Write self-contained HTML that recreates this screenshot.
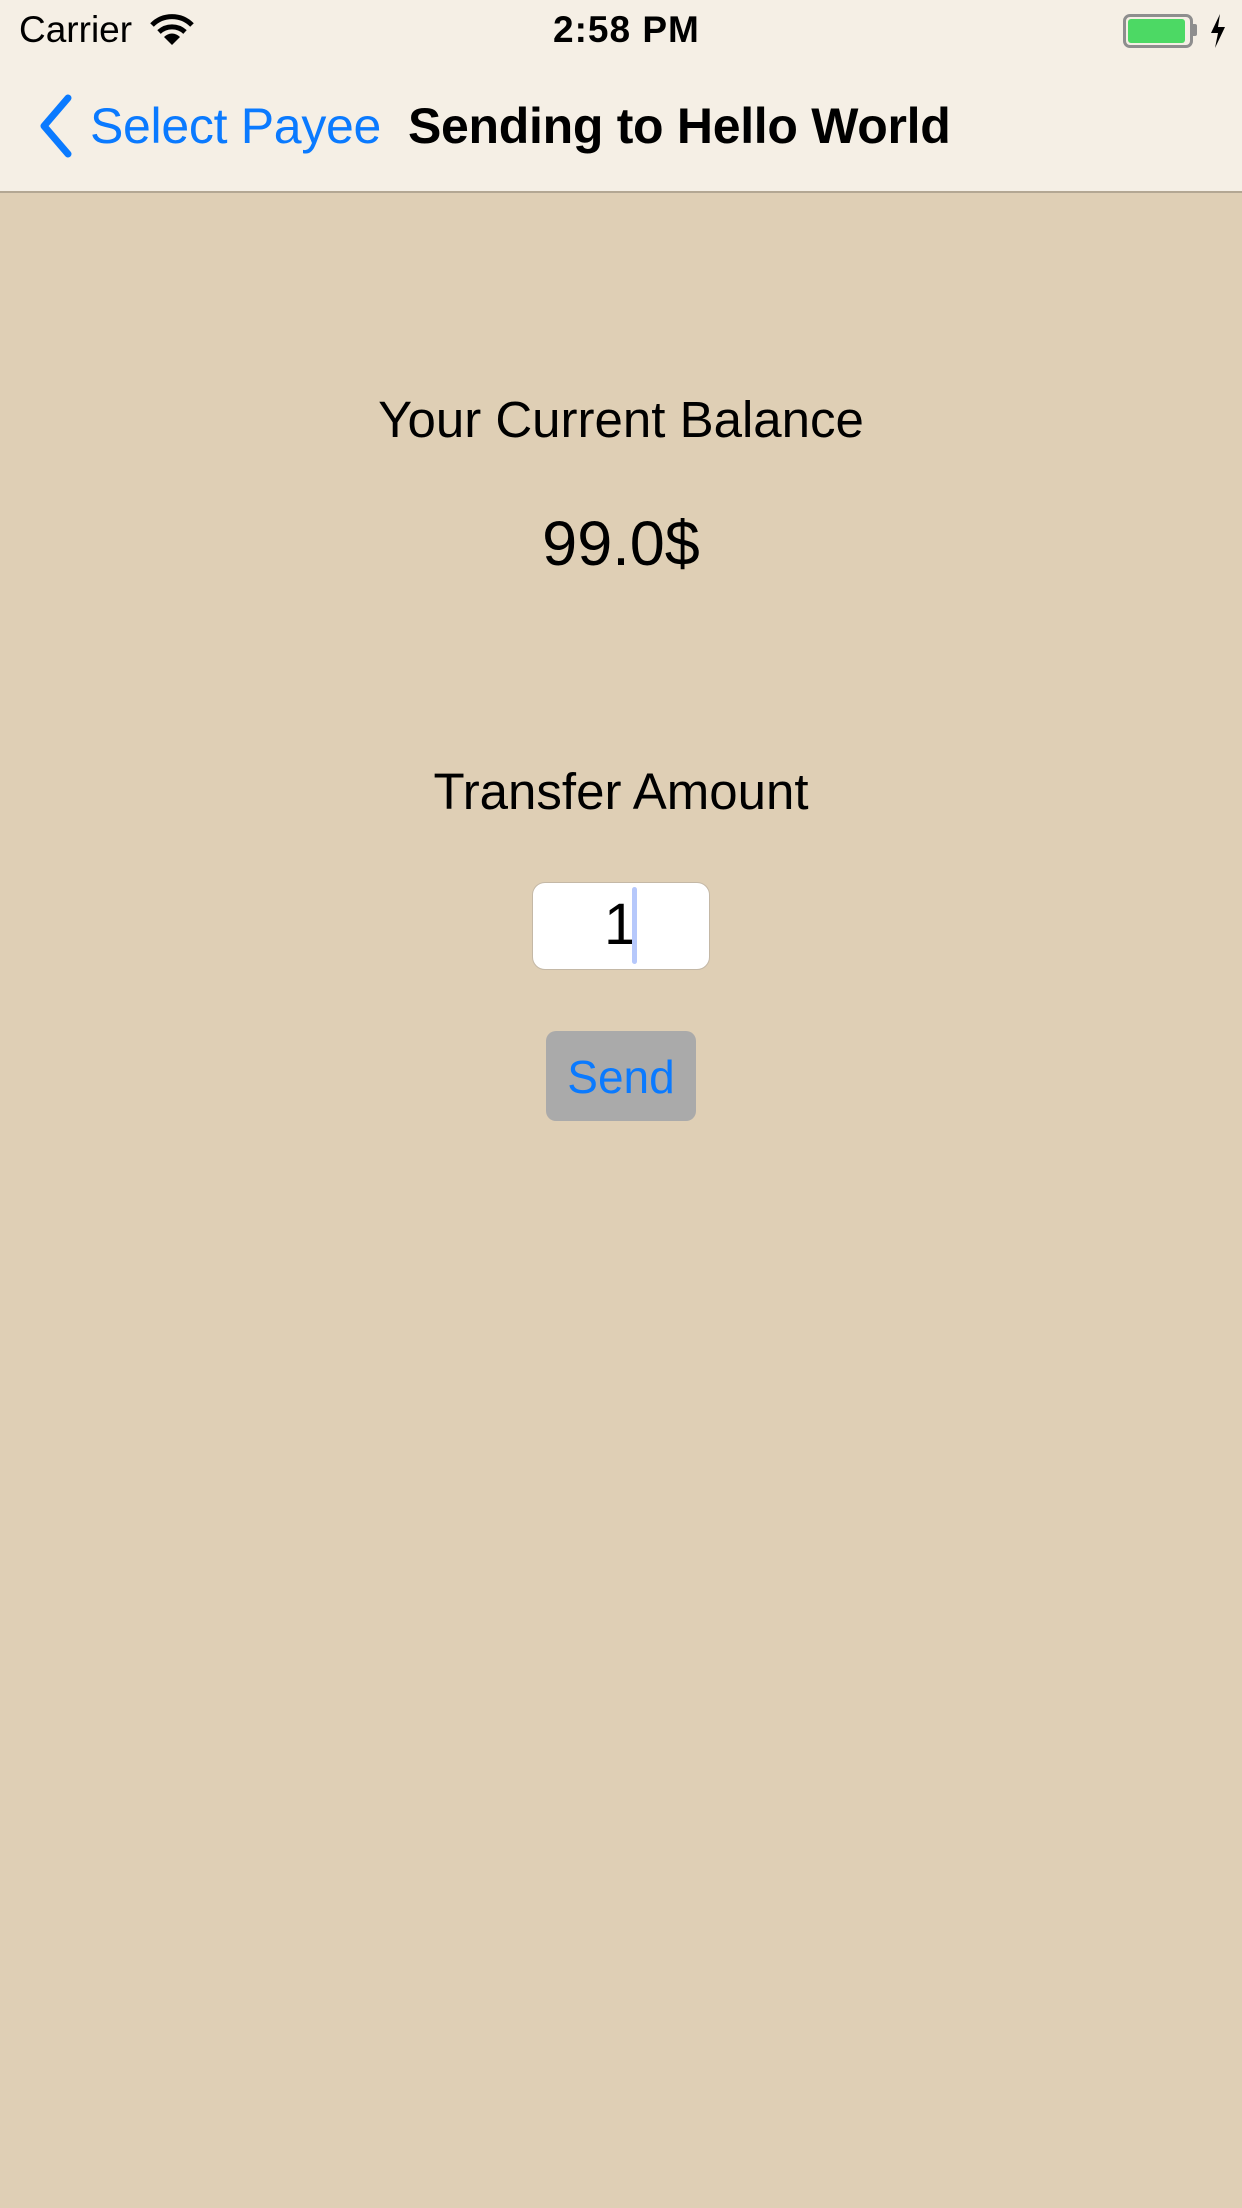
<!DOCTYPE html>
<html><head><meta charset="utf-8"><style>
html,body{margin:0;padding:0}
body{width:1242px;height:2208px;background:#dfcfb5;position:relative;overflow:hidden;font-family:"Liberation Sans",sans-serif;color:#000}
.nav{position:absolute;left:0;top:0;width:1242px;height:191px;background:#f5efe5;border-bottom:2px solid #b3a793}
.abs{position:absolute;white-space:nowrap}
.c{left:0;width:1242px;text-align:center}
</style></head><body>
<div class="nav">
  <div class="abs" style="left:19px;top:9px;font-size:37px;">Carrier</div>
  <svg class="abs" style="left:150px;top:14px" width="44" height="32" viewBox="0 0 44 32">
    <path d="M2 11 A28 28 0 0 1 42 11" fill="none" stroke="#000" stroke-width="5"/>
    <path d="M9 18 A19 19 0 0 1 35 18" fill="none" stroke="#000" stroke-width="5"/>
    <path d="M22 31 L14 23 A11 11 0 0 1 30 23 Z" fill="#000"/>
  </svg>
  <div class="abs" style="left:553px;top:9px;font-size:37px;font-weight:bold;letter-spacing:1px">2:58 PM</div>
  <div class="abs" style="left:1123px;top:14px;width:64px;height:28px;border:3px solid #8e8e8e;border-radius:7px;"></div>
  <div class="abs" style="left:1128px;top:19px;width:57px;height:24px;background:#4cd964;border-radius:3px;"></div>
  <div class="abs" style="left:1193px;top:24px;width:4px;height:12px;background:#8e8e8e;border-radius:0 2px 2px 0"></div>
  <svg class="abs" style="left:1208px;top:14px" width="20" height="34" viewBox="0 0 20 34"><path d="M12 0 L3 19 L10 19 L7 34 L17 13 L10 13 Z" fill="#000"/></svg>
  <svg class="abs" style="left:36px;top:94px" width="42" height="64" viewBox="0 0 42 64"><path d="M32 4 L8 32 L32 60" fill="none" stroke="#0a7aff" stroke-width="7" stroke-linecap="round" stroke-linejoin="round"/></svg>
  <div class="abs" style="left:90px;top:97px;font-size:50px;letter-spacing:-0.3px;color:#0a7aff;">Select Payee</div>
  <div class="abs" style="left:408px;top:97px;font-size:50px;letter-spacing:-0.3px;font-weight:bold;">Sending to Hello World</div>
</div>
<div class="abs c" style="top:390px;font-size:51px;">Your Current Balance</div>
<div class="abs c" style="top:508px;font-size:63px;">99.0$</div>
<div class="abs c" style="top:762px;font-size:51px;">Transfer Amount</div>
<div class="abs" style="left:532px;top:882px;width:176px;height:86px;background:#fff;border:1px solid #c4b8a6;border-radius:13px;"></div>
<div class="abs" style="left:604px;top:891px;font-size:58px;">1</div>
<div class="abs" style="left:632px;top:887px;width:5px;height:77px;background:#b6c8fb;border-radius:3px"></div>
<div class="abs" style="left:546px;top:1031px;width:150px;height:90px;background:#aaaaaa;border-radius:10px;"></div>
<div class="abs" style="left:546px;top:1050px;width:150px;text-align:center;font-size:46px;color:#0a7aff;">Send</div>
</body></html>
